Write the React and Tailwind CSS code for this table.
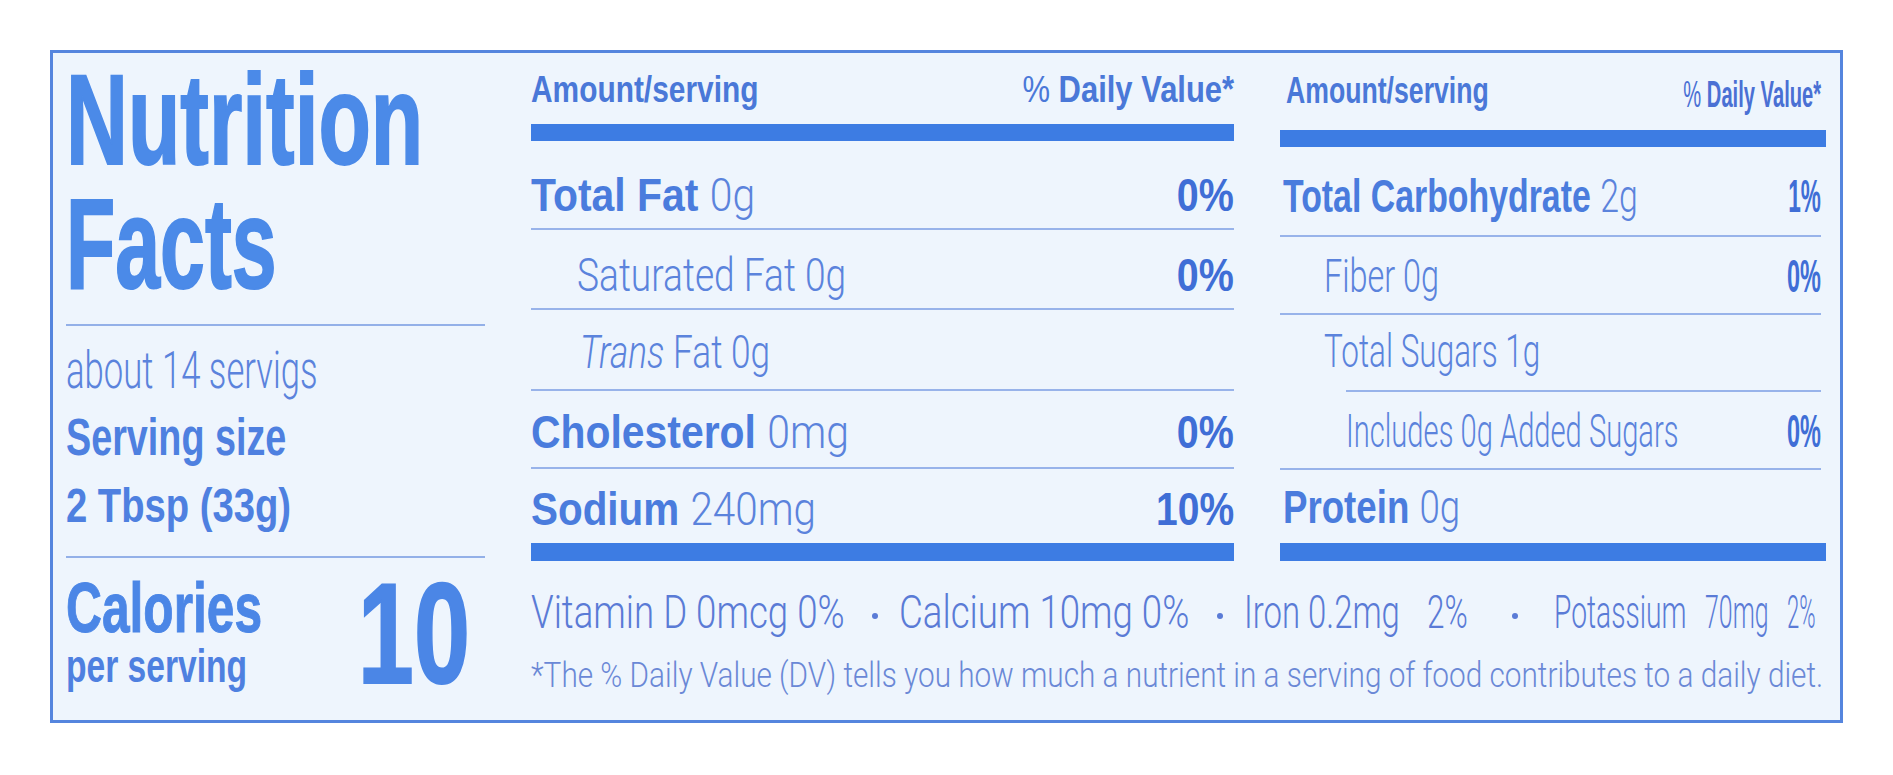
import React from "react";

const light = "font-['Roboto',sans-serif] font-light text-[#5b83dc]";

export default function App() {
  return (
    <div className="w-[1893px] h-[775px] overflow-hidden bg-white pt-[50px] pl-[50px] font-['Liberation_Sans',Arial,sans-serif]">
      <div className="w-[1793px] h-[673px] border-[3px] border-[#5585de] bg-[#eef5fd] flex pl-[13px]">
        {/* Left column */}
        <div className="w-[419px] shrink-0 flex flex-col">
          <div className="mt-[5px] text-[128px] font-bold text-[#4b8ae8] whitespace-nowrap [-webkit-text-stroke:2px_#4b8ae8]">
            <div className="h-[124px] leading-[124px]"><span className="inline-block origin-left scale-x-[0.67]">Nutrition</span></div>
            <div className="h-[124px] leading-[124px]"><span className="inline-block origin-left scale-x-[0.63]">Facts</span></div>
          </div>
          <div className="mt-[18px] h-[2px] bg-[#93b0e8]" />
          <div className="mt-[19px] whitespace-nowrap">
            <span className={"inline-block origin-left scale-x-[0.68] text-[51px] leading-none " + light}>about 14 servigs</span>
          </div>
          <div className="mt-[16px] whitespace-nowrap">
            <span className="inline-block origin-left scale-x-[0.74] text-[51px] leading-none font-bold text-[#4e80e0]">Serving size</span>
          </div>
          <div className="mt-[18px] whitespace-nowrap">
            <span className="inline-block origin-left scale-x-[0.78] text-[49px] leading-none font-bold text-[#4e80e0]">2 Tbsp (33g)</span>
          </div>
          <div className="mt-[26px] h-[2px] bg-[#93b0e8]" />
          <div className="flex justify-between">
            <div className="flex-1 min-w-0 flex flex-col whitespace-nowrap">
              <div className="mt-[15px] h-[70px]">
                <span className="inline-block origin-left scale-x-[0.71] text-[70px] leading-none font-bold text-[#4b86e6] [-webkit-text-stroke:1px_#4b86e6]">Calories</span>
              </div>
              <div>
                <span className="inline-block origin-left scale-x-[0.73] text-[46px] leading-none font-bold text-[#4e80e0]">per serving</span>
              </div>
            </div>
            <span className="shrink-0 mt-[5px] mr-[15px] inline-block origin-right scale-x-[0.71] text-[142px] leading-none font-bold text-[#4b86e6] [-webkit-text-stroke:2px_#4b86e6]">10</span>
          </div>
        </div>

        {/* Middle + right */}
        <div className="w-[1295px] shrink-0 ml-[46px] flex flex-col">
          <div className="flex gap-[46px]">
            {/* Middle table */}
            <div className="w-[703px] shrink-0 flex flex-col">
              <div className="h-[71px] pt-[19px] flex justify-between items-start whitespace-nowrap">
                <span className="inline-block origin-left scale-x-[0.83] text-[36px] leading-none font-bold text-[#4a78d8]">Amount/serving</span>
                <span className="inline-block origin-right scale-x-[0.86] text-[36px] leading-none font-bold text-[#4a78d8]"><span className="font-normal">%</span> Daily Value*</span>
              </div>
              <div className="h-[17px] bg-[#3d7ce3]" />
              <div className="h-[89px] pb-[10px] border-b-2 border-[#98b3ea] flex items-end justify-between">
                <div className="flex-1 min-w-0 whitespace-nowrap">
                  <span className="inline-block origin-left scale-x-[0.87] text-[47px] leading-none"><span className="font-bold text-[#4a7cdd]">Total Fat</span> <span className={light}>0g</span></span>
                </div>
                <span className="inline-block origin-right scale-x-[0.84] text-[47px] leading-none font-bold text-[#3f6ed6]">0%</span>
              </div>
              <div className="h-[80px] pb-[10px] border-b-2 border-[#98b3ea] flex items-end justify-between">
                <div className="flex-1 min-w-0 whitespace-nowrap pl-[46px]">
                  <span className={"inline-block origin-left scale-x-[0.79] text-[47px] leading-none " + light}>Saturated Fat 0g</span>
                </div>
                <span className="inline-block origin-right scale-x-[0.84] text-[47px] leading-none font-bold text-[#3f6ed6]">0%</span>
              </div>
              <div className="h-[81px] pb-[14px] border-b-2 border-[#98b3ea] flex items-end justify-between">
                <div className="flex-1 min-w-0 whitespace-nowrap pl-[49px]">
                  <span className={"inline-block origin-left scale-x-[0.75] text-[47px] leading-none " + light}><span className="italic">Trans</span> Fat 0g</span>
                </div>
              </div>
              <div className="h-[78px] pb-[12px] border-b-2 border-[#98b3ea] flex items-end justify-between">
                <div className="flex-1 min-w-0 whitespace-nowrap">
                  <span className="inline-block origin-left scale-x-[0.87] text-[47px] leading-none"><span className="font-bold text-[#4a7cdd]">Cholesterol</span> <span className={light}>0mg</span></span>
                </div>
                <span className="inline-block origin-right scale-x-[0.84] text-[47px] leading-none font-bold text-[#3f6ed6]">0%</span>
              </div>
              <div className="h-[74px] pb-[11px] flex items-end justify-between">
                <div className="flex-1 min-w-0 whitespace-nowrap">
                  <span className="inline-block origin-left scale-x-[0.86] text-[47px] leading-none"><span className="font-bold text-[#4a7cdd]">Sodium</span> <span className={light}>240mg</span></span>
                </div>
                <span className="inline-block origin-right scale-x-[0.83] text-[47px] leading-none font-bold text-[#3f6ed6]">10%</span>
              </div>
              <div className="h-[18px] bg-[#3d7ce3]" />
            </div>

            {/* Right table */}
            <div className="w-[546px] shrink-0 flex flex-col">
              <div className="h-[77px] pt-[20px] pr-[5px] flex justify-between items-start whitespace-nowrap">
                <span className="ml-[6px] inline-block origin-left scale-x-[0.74] text-[36px] leading-none font-bold text-[#4a78d8]">Amount/serving</span>
                <span className="mt-[4px] inline-block origin-right scale-x-[0.56] text-[36px] leading-none font-bold text-[#4a70d4]"><span className="font-normal">%</span> Daily Value*</span>
              </div>
              <div className="h-[17px] bg-[#3d7ce3]" />
              <div className="h-[90px] mr-[5px] pb-[16px] border-b-2 border-[#98b3ea] flex items-end justify-between">
                <div className="flex-1 min-w-0 whitespace-nowrap pl-[3px]">
                  <span className="inline-block origin-left scale-x-[0.72] text-[47px] leading-none"><span className="font-bold text-[#4a7cdd]">Total Carbohydrate</span> <span className={light}>2g</span></span>
                </div>
                <span className="inline-block origin-right scale-x-[0.48] text-[47px] leading-none font-bold text-[#3f6ed6]">1%</span>
              </div>
              <div className="h-[78px] mr-[5px] pb-[14px] border-b-2 border-[#98b3ea] flex items-end justify-between">
                <div className="flex-1 min-w-0 whitespace-nowrap pl-[44px]">
                  <span className={"inline-block origin-left scale-x-[0.69] text-[47px] leading-none " + light}>Fiber 0g</span>
                </div>
                <span className="inline-block origin-right scale-x-[0.5] text-[47px] leading-none font-bold text-[#3f6ed6]">0%</span>
              </div>
              <div className="h-[77px] ml-[66px] mr-[5px] pb-[16px] border-b-2 border-[#98b3ea] flex items-end justify-between">
                <div className="flex-1 min-w-0 whitespace-nowrap -ml-[22px]">
                  <span className={"inline-block origin-left scale-x-[0.67] text-[47px] leading-none " + light}>Total Sugars 1g</span>
                </div>
              </div>
              <div className="h-[78px] mr-[5px] pb-[14px] border-b-2 border-[#98b3ea] flex items-end justify-between">
                <div className="flex-1 min-w-0 whitespace-nowrap pl-[66px]">
                  <span className={"inline-block origin-left scale-x-[0.62] text-[47px] leading-none " + light}>Includes 0g Added Sugars</span>
                </div>
                <span className="inline-block origin-right scale-x-[0.5] text-[47px] leading-none font-bold text-[#3f6ed6]">0%</span>
              </div>
              <div className="h-[73px] mr-[5px] pb-[13px] flex items-end justify-between">
                <div className="flex-1 min-w-0 whitespace-nowrap pl-[3px]">
                  <span className="inline-block origin-left scale-x-[0.78] text-[47px] leading-none"><span className="font-bold text-[#4a7cdd]">Protein</span> <span className={light}>0g</span></span>
                </div>
              </div>
              <div className="h-[18px] bg-[#3d7ce3]" />
            </div>
          </div>

          {/* Vitamins */}
          <div className="mt-[27px] h-[47px] flex items-center whitespace-nowrap text-[47px] leading-none font-['Roboto',sans-serif] font-light text-[#5a7bd6]">
            <div className="w-[341px] shrink-0"><span className="inline-block origin-left scale-x-[0.78]">Vitamin D 0mcg 0%</span></div>
            <div className="w-[27px] shrink-0 mt-[8px]"><div className="w-[6px] h-[6px] rounded-full bg-[#5a7bd6]" /></div>
            <div className="w-[318px] shrink-0"><span className="inline-block origin-left scale-x-[0.78]">Calcium 10mg 0%</span></div>
            <div className="w-[27px] shrink-0 mt-[8px]"><div className="w-[6px] h-[6px] rounded-full bg-[#5a7bd6]" /></div>
            <div className="w-[183px] shrink-0"><span className="inline-block origin-left scale-x-[0.70]">Iron 0.2mg</span></div>
            <div className="w-[85px] shrink-0"><span className="inline-block origin-left scale-x-[0.67]">2%</span></div>
            <div className="w-[42px] shrink-0 mt-[8px]"><div className="w-[6px] h-[6px] rounded-full bg-[#5a7bd6]" /></div>
            <div className="w-[151px] shrink-0"><span className="inline-block origin-left scale-x-[0.60]">Potassium</span></div>
            <div className="w-[82px] shrink-0"><span className="inline-block origin-left scale-x-[0.53]">70mg</span></div>
            <div className="w-[40px] shrink-0"><span className="inline-block origin-left scale-x-[0.47]">2%</span></div>
          </div>

          {/* Footnote */}
          <div className="mt-[23px] whitespace-nowrap">
            <span className="inline-block origin-left scale-x-[0.85] text-[35px] leading-none font-['Roboto',sans-serif] font-light text-[#6a88d6]">*The % Daily Value (DV) tells you how much a nutrient in a serving of food contributes to a daily diet.</span>
          </div>
        </div>
      </div>
    </div>
  );
}
